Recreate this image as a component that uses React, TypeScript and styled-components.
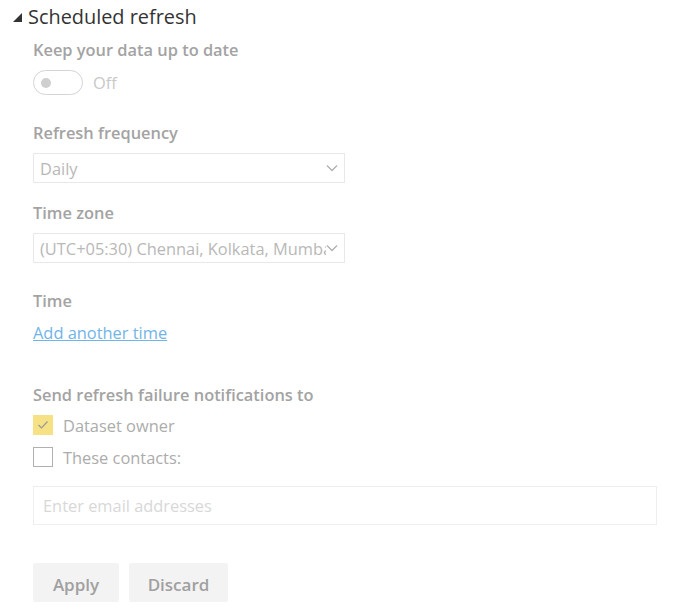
import React from "react";
import styled, { createGlobalStyle } from "styled-components";

const Global = createGlobalStyle`
  html, body { margin: 0; padding: 0; background: #fff; }
  body { font-family: "Open Sans", "Noto Sans", sans-serif; }
`;

const Page = styled.div`
  width: 691px;
  height: 614px;
  padding-top: 3px;
  box-sizing: border-box;
`;

const TitleRow = styled.div`
  display: flex;
  align-items: center;
  gap: 6px;
  padding-left: 13px;
  height: 28px;
`;

const Title = styled.div`
  font-size: 19.9px;
  color: #333;
  line-height: 28px;
`;

const Body = styled.div`
  padding-left: 33px;
  display: flex;
  flex-direction: column;
`;

const Label = styled.div<{ $mt: number }>`
  margin-top: ${(p) => p.$mt}px;
  font-size: 16.4px;
  font-weight: 600;
  color: #a3a3a3;
  line-height: 22px;
`;

const ToggleRow = styled.div<{ $mt: number }>`
  margin-top: ${(p) => p.$mt}px;
  display: flex;
  align-items: center;
  gap: 10px;
  height: 25px;
`;

const Toggle = styled.div`
  width: 50px;
  height: 25px;
  box-sizing: border-box;
  border: 1px solid #d4d4d4;
  border-radius: 13px;
  display: flex;
  align-items: center;
  padding-left: 7px;
`;

const Knob = styled.div`
  width: 10px;
  height: 10px;
  border-radius: 50%;
  background: #cfcfcf;
`;

const ToggleText = styled.span`
  font-size: 16.4px;
  color: #c8c8c8;
`;

const Select = styled.div<{ $mt: number }>`
  margin-top: ${(p) => p.$mt}px;
  width: 312px;
  height: 30px;
  box-sizing: border-box;
  border: 1px solid #e8e8e8;
  display: flex;
  align-items: center;
  justify-content: space-between;
  padding: 0 6px 0 6px;
  font-size: 16.4px;
  color: #b8b8b8;
`;

const SelectText = styled.span`
  white-space: nowrap;
  overflow: hidden;
  flex: 1;
`;

const Link = styled.a<{ $mt: number }>`
  margin-top: ${(p) => p.$mt}px;
  font-size: 16.4px;
  line-height: 22px;
  color: #72b4e8;
  text-decoration: underline;
  align-self: flex-start;
`;

const CheckRow = styled.div<{ $mt: number }>`
  margin-top: ${(p) => p.$mt}px;
  display: flex;
  align-items: center;
  gap: 10px;
  height: 20px;
`;

const Box = styled.div<{ $checked?: boolean }>`
  width: 20px;
  height: 20px;
  box-sizing: border-box;
  border: 1px solid ${(p) => (p.$checked ? "#f7e185" : "#b0b0b0")};
  background: ${(p) => (p.$checked ? "#f7e185" : "#fff")};
  display: flex;
  align-items: center;
  justify-content: center;
`;

const CheckText = styled.span`
  font-size: 16.4px;
  color: #acacac;
`;

const EmailInput = styled.div<{ $mt: number }>`
  margin-top: ${(p) => p.$mt}px;
  width: 624px;
  height: 39px;
  box-sizing: border-box;
  border: 1.5px solid #eeeeee;
  display: flex;
  align-items: center;
  padding-left: 9px;
  font-size: 16.4px;
  color: #d8d8d8;
`;

const ButtonRow = styled.div<{ $mt: number }>`
  margin-top: ${(p) => p.$mt}px;
  display: flex;
  gap: 10px;
`;

const Button = styled.div<{ $w: number }>`
  width: ${(p) => p.$w}px;
  height: 39px;
  box-sizing: border-box;
  padding-top: 3px;
  border-radius: 2px;
  background: #f3f3f3;
  display: flex;
  align-items: center;
  justify-content: center;
  font-size: 17px;
  font-weight: 600;
  color: #a0a0a0;
`;

const Chevron = () => (
  <svg width="12" height="8" viewBox="0 0 12 8">
    <path d="M1 1.5 L6 6.5 L11 1.5" fill="none" stroke="#b0b0b0" strokeWidth="1.3" />
  </svg>
);

export default function App() {
  return (
    <Page>
      <Global />
      <TitleRow>
        <svg width="9" height="9" viewBox="0 0 9 9">
          <polygon points="9,0 9,9 0,9" fill="#333" />
        </svg>
        <Title>Scheduled refresh</Title>
      </TitleRow>
      <Body>
        <Label $mt={8}>Keep your data up to date</Label>
        <ToggleRow $mt={9}>
          <Toggle>
            <Knob />
          </Toggle>
          <ToggleText>Off</ToggleText>
        </ToggleRow>
        <Label $mt={27}>Refresh frequency</Label>
        <Select $mt={9}>
          <SelectText>Daily</SelectText>
          <Chevron />
        </Select>
        <Label $mt={19}>Time zone</Label>
        <Select $mt={9}>
          <SelectText>(UTC+05:30) Chennai, Kolkata, Mumbai, New Delhi</SelectText>
          <Chevron />
        </Select>
        <Label $mt={27}>Time</Label>
        <Link $mt={10}>Add another time</Link>
        <Label $mt={40}>Send refresh failure notifications to</Label>
        <CheckRow $mt={9}>
          <Box $checked>
            <svg width="12" height="10" viewBox="0 0 12 10">
              <path d="M1.5 5 L4.5 8 L10.5 1.5" fill="none" stroke="#999" strokeWidth="1.2" />
            </svg>
          </Box>
          <CheckText>Dataset owner</CheckText>
        </CheckRow>
        <CheckRow $mt={12}>
          <Box />
          <CheckText>These contacts:</CheckText>
        </CheckRow>
        <EmailInput $mt={19}>Enter email addresses</EmailInput>
        <ButtonRow $mt={38}>
          <Button $w={86}>Apply</Button>
          <Button $w={99}>Discard</Button>
        </ButtonRow>
      </Body>
    </Page>
  );
}
